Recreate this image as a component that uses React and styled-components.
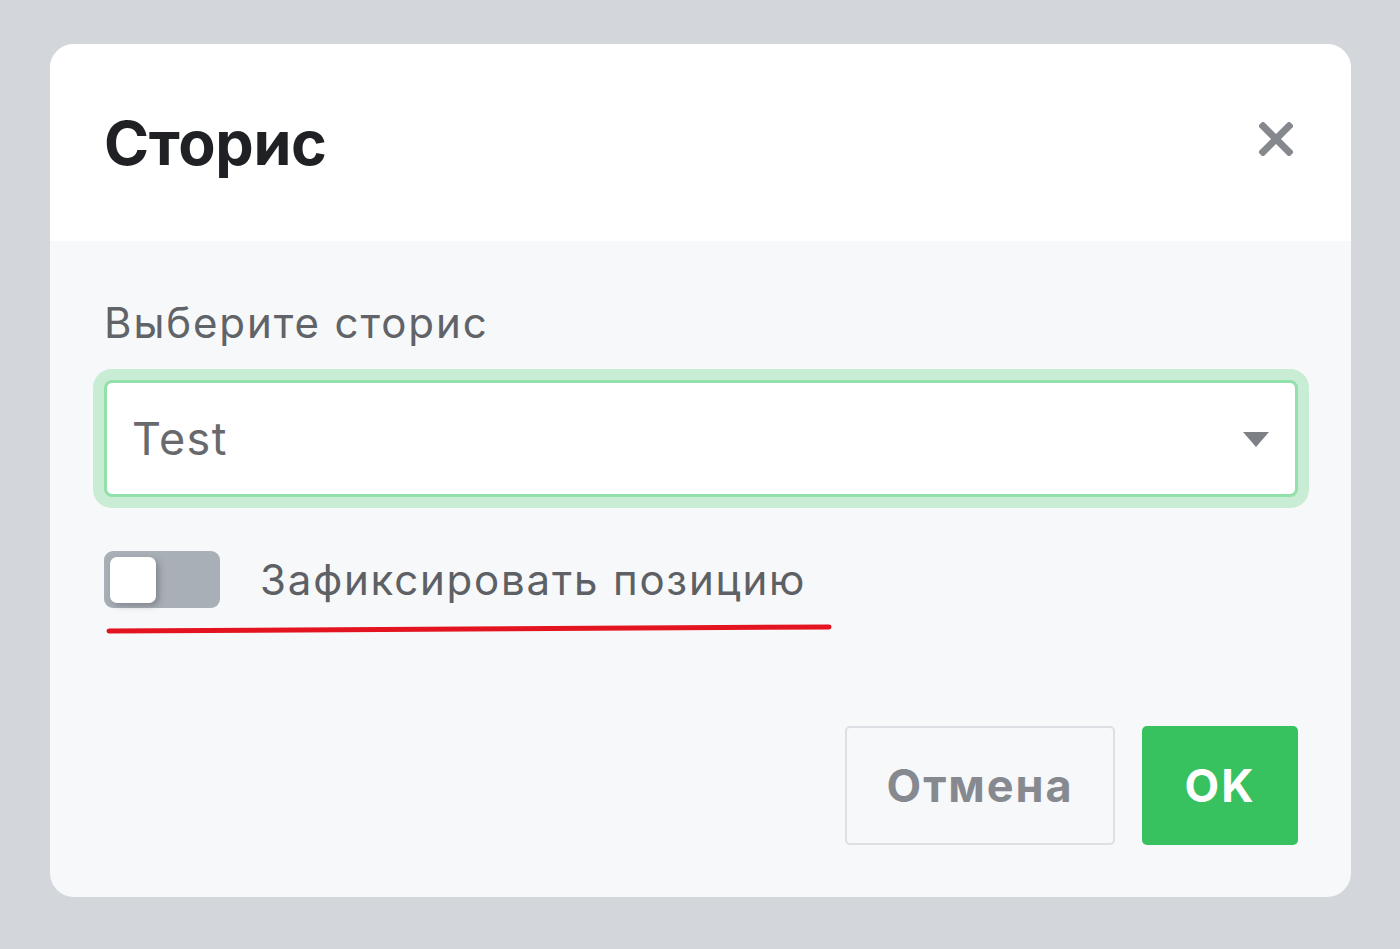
import React, { useState } from "react";
import styled, { createGlobalStyle } from "styled-components";

const GlobalStyle = createGlobalStyle`
  html, body {
    margin: 0;
    padding: 0;
    background: #d3d6da;
    font-family: Inter, "Noto Sans", "Liberation Sans", sans-serif;
  }
`;

const Page = styled.div`
  padding: 44px 49px 51px 50px;
`;

const Dialog = styled.div`
  width: 1301px;
  border-radius: 24px;
  overflow: hidden;
  background: #f7f8fa;
`;

const Header = styled.div`
  height: 197px;
  background: #ffffff;
  display: flex;
  align-items: center;
  justify-content: space-between;
  padding: 0 58px 0 54px;
  box-sizing: border-box;
`;

const Title = styled.h2`
  margin: 0;
  font-size: 61px;
  font-weight: 700;
  color: #1f2125;
  letter-spacing: -0.3px;
`;

const CloseButton = styled.button`
  border: 0;
  background: none;
  padding: 0;
  width: 34px;
  height: 34px;
  display: flex;
  cursor: pointer;
  margin-top: -8px;
`;

const Body = styled.div`
  padding: 57px 53px 52px 54px;
`;

const FieldLabel = styled.div`
  font-size: 42px;
  line-height: 50px;
  color: #606367;
  letter-spacing: 1.9px;
`;

const SelectBox = styled.div`
  margin-top: 32px;
  height: 117px;
  box-sizing: border-box;
  background: #ffffff;
  border: 3px solid #92e1ab;
  border-radius: 8px;
  box-shadow: 0 0 0 11px #c9ecd4;
  display: flex;
  align-items: center;
  justify-content: space-between;
  padding: 0 26px 0 25px;
`;

const SelectValue = styled.span`
  font-size: 45px;
  color: #67696d;
  letter-spacing: 1.4px;
`;

const Caret = styled.span`
  width: 0;
  height: 0;
  border-left: 13px solid transparent;
  border-right: 13px solid transparent;
  border-top: 15px solid #7d8187;
  margin-top: 2px;
`;

const ToggleRow = styled.label`
  margin-top: 54px;
  display: flex;
  align-items: center;
  gap: 40px;
  cursor: pointer;
`;

const Track = styled.span`
  width: 116px;
  height: 57px;
  border-radius: 9px;
  background: ${(p) => (p.$on ? "#37c15f" : "#a9afb6")};
  display: flex;
  align-items: center;
  justify-content: ${(p) => (p.$on ? "flex-end" : "flex-start")};
  padding: 0 6px;
  box-sizing: border-box;
  flex-shrink: 0;
`;

const Knob = styled.span`
  width: 46px;
  height: 46px;
  border-radius: 7px;
  background: #ffffff;
  box-shadow: 3px 3px 6px rgba(60, 64, 70, 0.35);
`;

const ToggleText = styled.span`
  font-size: 42px;
  color: #5d6064;
  letter-spacing: 1.8px;
`;

const Underline = styled.svg`
  display: block;
  margin: 15px 0 0 2px;
`;

const Actions = styled.div`
  margin-top: 91px;
  display: flex;
  justify-content: flex-end;
  gap: 27px;
`;

const Button = styled.button`
  height: 119px;
  box-sizing: border-box;
  border-radius: 5px;
  font-family: inherit;
  font-size: 45px;
  font-weight: 700;
  letter-spacing: 1.9px;
  cursor: pointer;
  padding: 0;
  width: ${(p) => p.$w}px;
  border: ${(p) => (p.$primary ? "0" : "2px solid #dcdfe3")};
  background: ${(p) => (p.$primary ? "#37c15f" : "#f7f8fa")};
  color: ${(p) => (p.$primary ? "#ffffff" : "#868a90")};
`;

export default function App() {
  const [fixed, setFixed] = useState(false);

  return (
    <>
      <GlobalStyle />
      <Page>
        <Dialog>
          <Header>
            <Title>Сторис</Title>
            <CloseButton aria-label="Закрыть">
              <svg width="34" height="34" viewBox="0 0 34 34">
                <path
                  d="M4 4 L30 30 M30 4 L4 30"
                  stroke="#85888d"
                  strokeWidth="7"
                  strokeLinecap="square"
                />
              </svg>
            </CloseButton>
          </Header>
          <Body>
            <FieldLabel>Выберите сторис</FieldLabel>
            <SelectBox>
              <SelectValue>Test</SelectValue>
              <Caret />
            </SelectBox>
            <ToggleRow onClick={() => setFixed(!fixed)}>
              <Track $on={fixed}>
                <Knob />
              </Track>
              <ToggleText>Зафиксировать позицию</ToggleText>
            </ToggleRow>
            <Underline width="726" height="12" viewBox="0 0 726 12">
              <path
                d="M3 8 C 200 7, 450 6, 723 4"
                stroke="#e3141f"
                strokeWidth="5"
                fill="none"
                strokeLinecap="round"
              />
            </Underline>
            <Actions>
              <Button $w={270}>Отмена</Button>
              <Button $primary $w={156}>OK</Button>
            </Actions>
          </Body>
        </Dialog>
      </Page>
    </>
  );
}
